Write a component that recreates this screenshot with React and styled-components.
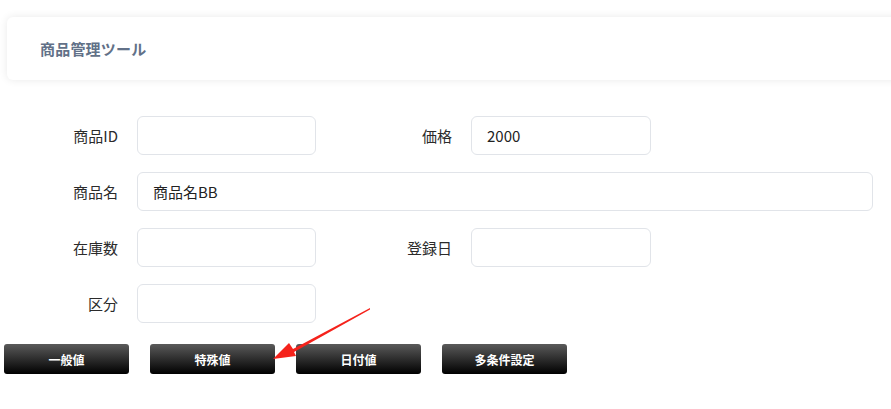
import React from 'react'
import styled, { createGlobalStyle } from 'styled-components'

const GlobalStyle = createGlobalStyle`
  body {
    margin: 0;
    background: #fff;
    font-family: "Noto Sans CJK JP", "Noto Sans", sans-serif;
    overflow: hidden;
  }
`

const Page = styled.div`
  position: relative;
  width: 891px;
  height: 409px;
`

const HeaderCard = styled.div`
  margin: 17px -30px 0 7px;
  height: 63px;
  display: flex;
  align-items: center;
  padding-left: 33px;
  background: #fff;
  border-radius: 6px;
  box-shadow: 0 0 8px rgba(0, 0, 0, 0.09);
`

const Title = styled.h1`
  margin: 0;
  font-size: 15px;
  font-weight: 700;
  color: #627188;
  letter-spacing: 0.2px;
`

const Form = styled.div`
  margin-top: 36px;
  display: flex;
  flex-direction: column;
  gap: 17px;
`

const Row = styled.div`
  display: flex;
  align-items: center;
`

const Label = styled.label`
  width: ${p => p.w}px;
  margin-right: 19px;
  text-align: right;
  font-size: 15px;
  color: #2b2b2b;
  flex-shrink: 0;
`

const Input = styled.input`
  box-sizing: border-box;
  width: ${p => p.w}px;
  height: 39px;
  padding: 0 15px;
  border: 1px solid #e1e4e9;
  border-radius: 6px;
  font-family: "Noto Sans CJK JP", "Noto Sans", sans-serif;
  font-size: 15px;
  color: #222;
  outline: none;
`

const ButtonBar = styled.div`
  margin: 21px 0 0 4px;
  display: flex;
  gap: 21px;
`

const Button = styled.button`
  width: 125px;
  height: 30px;
  border: none;
  border-radius: 3px;
  background: linear-gradient(#5a5a5a, #000);
  color: #fff;
  font-family: "Noto Sans CJK JP", "Noto Sans", sans-serif;
  font-size: 12px;
  font-weight: 700;
  cursor: pointer;
`

const Arrow = styled.svg`
  position: absolute;
  left: 0;
  top: 0;
  pointer-events: none;
`

export default function App() {
  return (
    <Page>
      <GlobalStyle />
      <HeaderCard>
        <Title>商品管理ツール</Title>
      </HeaderCard>
      <Form>
        <Row>
          <Label w={118}>商品ID</Label>
          <Input w={179} />
          <Label w={136}>価格</Label>
          <Input w={180} defaultValue="2000" />
        </Row>
        <Row>
          <Label w={118}>商品名</Label>
          <Input w={736} defaultValue="商品名BB" />
        </Row>
        <Row>
          <Label w={118}>在庫数</Label>
          <Input w={179} />
          <Label w={136}>登録日</Label>
          <Input w={180} />
        </Row>
        <Row>
          <Label w={118}>区分</Label>
          <Input w={179} />
        </Row>
      </Form>
      <ButtonBar>
        <Button>一般値</Button>
        <Button>特殊値</Button>
        <Button>日付値</Button>
        <Button>多条件設定</Button>
      </ButtonBar>
      <Arrow width="891" height="409">
        <polygon points="370,291 293,332 289,326 273,342 296,339 294,335 370,292.5" fill="#f5221b" />
      </Arrow>
    </Page>
  )
}
